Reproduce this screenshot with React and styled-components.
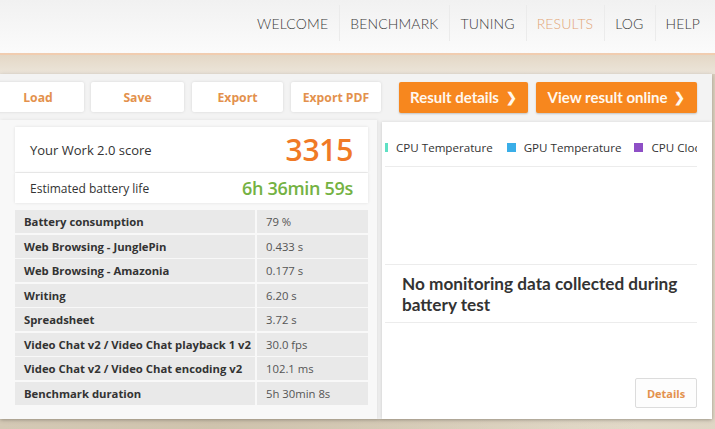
import React from 'react';
import styled, { createGlobalStyle } from 'styled-components';

const Global = createGlobalStyle`
  html, body { margin: 0; padding: 0; }
  body {
    width: 715px;
    height: 429px;
    overflow: hidden;
    font-family: "Open Sans", "Liberation Sans", sans-serif;
    background: #d9cfbd;
  }
`;

/** Page frame **/
const Page = styled.div`
  display: flex;
  flex-direction: column;
  width: 715px;
  height: 429px;
  overflow: hidden;
  background:
    radial-gradient(ellipse at 30% 100%, #cfc3ad 0%, transparent 60%),
    radial-gradient(ellipse at 80% 100%, #e3dac9 0%, transparent 50%),
    #d9cfbd;
`;

const Header = styled.header`
  height: 53px;
  display: flex;
  justify-content: flex-end;
  align-items: center;
  padding-right: 4px;
  background: linear-gradient(#f1f1f1, #fbfbfb);
  border-bottom: 2px solid #f1cdb0;
`;

const Nav = styled.nav`
  display: flex;
  align-items: stretch;
  height: 36px;
  margin-top: -7px;
`;

const NavItem = styled.a`
  display: flex;
  align-items: center;
  padding: 0 11px 0 10px;
  font-family: Lato, "Open Sans", sans-serif;
  font-size: 14px;
  letter-spacing: 0.15px;
  color: ${p => (p.active ? '#e3a576' : '#3a3a3a')};
  border-left: ${p => (p.first ? 'none' : '1px solid #ebebeb')};
  font-weight: 300;
`;

const Band = styled.div`
  height: 19px;
  background: linear-gradient(#e4d8c6, #ece5da);
`;

const Panel = styled.main`
  height: 345px;
  margin-right: 3px;
  display: flex;
  flex-direction: column;
  background: #f3f3f3;
  box-shadow: 0 1px 4px rgba(0, 0, 0, 0.25);
`;

/** Toolbar **/
const Toolbar = styled.div`
  display: flex;
  align-items: center;
  height: 46px;
  padding: 0 15px 0 0;
  flex-shrink: 0;
`;

const Button = styled.button`
  height: 30px;
  width: ${p => p.w}px;
  margin-left: ${p => p.ml || 0}px;
  border: none;
  border-radius: 2px;
  background: #fff;
  box-shadow: 0 0 3px rgba(0, 0, 0, 0.12);
  font-family: "Open Sans", sans-serif;
  font-weight: 700;
  font-size: 12.2px;
  color: #e3914d;
  padding: 0;
`;

const OrangeButton = styled.button`
  height: 31px;
  width: ${p => p.w}px;
  margin-left: ${p => p.ml || 0}px;
  border: none;
  border-radius: 2px;
  background: #f7871e;
  box-shadow: 0 1px 2px rgba(0, 0, 0, 0.2);
  font-family: Lato, "Open Sans", sans-serif;
  font-weight: 700;
  font-size: 15px;
  color: #fff8ef;
  padding: 0;
  display: flex;
  align-items: center;
  justify-content: center;
  gap: 7px;
`;

const Chevron = styled.span`
  font-size: 13px;
  font-weight: 700;
`;

/** Content **/
const Content = styled.div`
  flex: 1;
  display: flex;
  min-height: 0;
`;

const LeftColumn = styled.section`
  width: 353px;
  flex-shrink: 0;
  padding: 7px 9px 0 15px;
  background: #f8f8f8;
  box-shadow: 1px 0 3px rgba(0, 0, 0, 0.08);
  display: flex;
  flex-direction: column;
`;

const ScoreBox = styled.div`
  height: ${p => p.h}px;
  display: flex;
  align-items: center;
  justify-content: space-between;
  padding: 0 15px 0 ${p => p.pl}px;
  background: #fff;
  box-shadow: 0 0 3px rgba(0, 0, 0, 0.1);
  margin-bottom: 1px;
`;

const ScoreLabel = styled.span`
  font-size: ${p => p.size}px;
  color: #333;
`;

const ScoreValue = styled.span`
  font-size: ${p => p.size}px;
  font-weight: 600;
  color: ${p => p.color};
  letter-spacing: -0.3px;
`;

const Table = styled.div`
  margin-top: 6px;
  display: grid;
  grid-template-columns: 240px 111px;
  column-gap: 2px;
  row-gap: 1.5px;
`;

const Cell = styled.div`
  height: 23px;
  display: flex;
  align-items: center;
  padding-left: 9px;
  background: #e9e9e9;
  font-size: 11.3px;
  font-weight: ${p => (p.label ? 700 : 400)};
  color: ${p => (p.label ? '#333' : '#555')};
  white-space: nowrap;
`;

const RightCard = styled.section`
  flex: 1;
  margin-left: 5px;
  margin-top: 2px;
  background: #fff;
  box-shadow: -1px 0 3px rgba(0, 0, 0, 0.12);
  display: flex;
  flex-direction: column;
  padding: 0 15px 0 3px;
  min-width: 0;
`;

const Legend = styled.div`
  height: 45px;
  box-sizing: border-box;
  padding-top: 6px;
  display: flex;
  align-items: center;
  overflow: hidden;
  white-space: nowrap;
  border-bottom: 1px solid #ececec;
  flex-shrink: 0;
`;

const LegendItem = styled.span`
  display: flex;
  align-items: center;
  gap: 8px;
  margin-left: ${p => p.ml}px;
  font-size: 11.6px;
  color: #333;
  flex-shrink: 0;
`;

const Swatch = styled.i`
  width: 9px;
  height: 9px;
  background: ${p => p.color};
`;

const Message = styled.div`
  margin-top: 97px;
  padding: 8px 0 7px 17px;
  border-top: 1px solid #ececec;
  border-bottom: 1px solid #ececec;
  font-family: Lato, "Open Sans", sans-serif;
  font-weight: 700;
  font-size: 17.2px;
  line-height: 21px;
  color: #333;
`;

const Footer = styled.div`
  flex: 1;
  display: flex;
  justify-content: flex-end;
  align-items: flex-end;
  padding-bottom: 11px;
`;

const DetailsButton = styled.button`
  width: 62px;
  height: 30px;
  background: #fdfdfd;
  border: 1px solid #dcdcdc;
  border-radius: 2px;
  font-family: "Open Sans", sans-serif;
  font-weight: 700;
  font-size: 11px;
  color: #e3914d;
  padding: 0;
`;

const nav = ['WELCOME', 'BENCHMARK', 'TUNING', 'RESULTS', 'LOG', 'HELP'];

const rows = [
  ['Battery consumption', '79 %'],
  ['Web Browsing - JunglePin', '0.433 s'],
  ['Web Browsing - Amazonia', '0.177 s'],
  ['Writing', '6.20 s'],
  ['Spreadsheet', '3.72 s'],
  ['Video Chat v2 / Video Chat playback 1 v2', '30.0 fps'],
  ['Video Chat v2 / Video Chat encoding v2', '102.1 ms'],
  ['Benchmark duration', '5h 30min 8s'],
];

export default function App() {
  return (
    <Page>
      <Global />
      <Header>
        <Nav>
          {nav.map((n, i) => (
            <NavItem key={n} first={i === 0} active={n === 'RESULTS'}>{n}</NavItem>
          ))}
        </Nav>
      </Header>
      <Band />
      <Panel>
        <Toolbar>
          <Button w={92} ml={-8}>Load</Button>
          <Button w={93} ml={7}>Save</Button>
          <Button w={91} ml={8}>Export</Button>
          <Button w={90} ml={8}>Export PDF</Button>
          <OrangeButton w={129} ml={18}>Result details <Chevron>❯</Chevron></OrangeButton>
          <OrangeButton w={161} ml={8}>View result online <Chevron>❯</Chevron></OrangeButton>
        </Toolbar>
        <Content>
          <LeftColumn>
            <ScoreBox h={45} pl={15}>
              <ScoreLabel size={13}>Your Work 2.0 score</ScoreLabel>
              <ScoreValue size={30} color="#f07a26">3315</ScoreValue>
            </ScoreBox>
            <ScoreBox h={30} pl={15}>
              <ScoreLabel size={12}>Estimated battery life</ScoreLabel>
              <ScoreValue size={18} color="#74b243">6h 36min 59s</ScoreValue>
            </ScoreBox>
            <Table>
              {rows.map(([k, v]) => (
                <React.Fragment key={k}>
                  <Cell label>{k}</Cell>
                  <Cell>{v}</Cell>
                </React.Fragment>
              ))}
            </Table>
          </LeftColumn>
          <RightCard>
            <Legend>
              <LegendItem ml={-6}><Swatch color="#5ee0c4" />CPU Temperature</LegendItem>
              <LegendItem ml={14}><Swatch color="#3aaee8" />GPU Temperature</LegendItem>
              <LegendItem ml={13}><Swatch color="#8e4fc6" />CPU Clock Frequency</LegendItem>
            </Legend>
            <Message>No monitoring data collected during<br />battery test</Message>
            <Footer>
              <DetailsButton>Details</DetailsButton>
            </Footer>
          </RightCard>
        </Content>
      </Panel>
    </Page>
  );
}
